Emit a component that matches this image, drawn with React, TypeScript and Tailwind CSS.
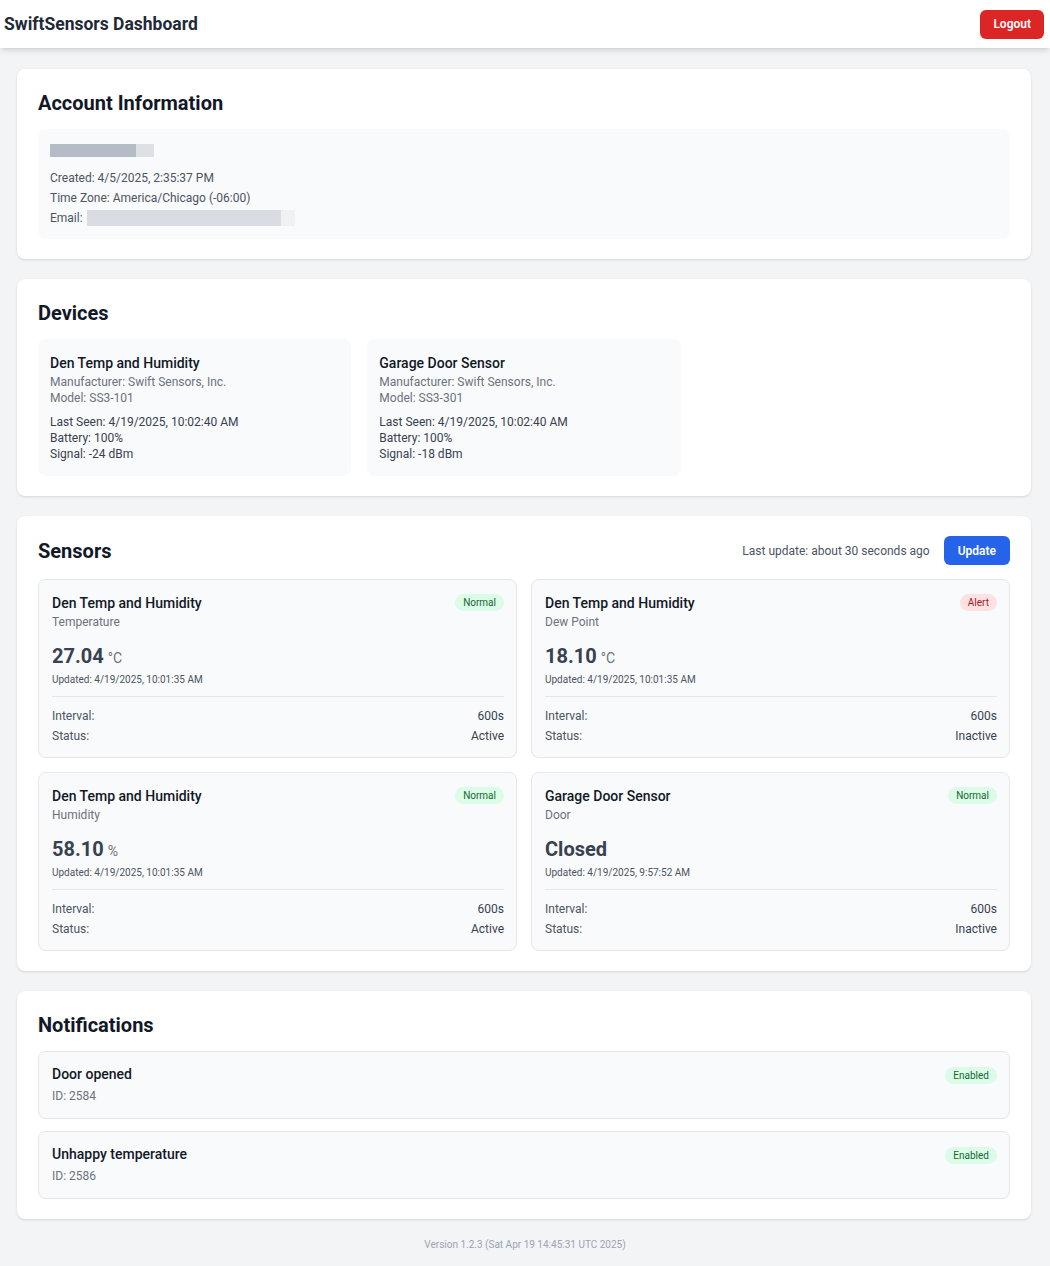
import React from 'react';

type Device = {
  name: string;
  model: string;
  lastSeen: string;
  battery: string;
  signal: string;
};

type Sensor = {
  device: string;
  kind: string;
  value: string;
  unit?: string;
  updated: string;
  alert: boolean;
  status: string;
};

const devices: Device[] = [
  { name: 'Den Temp and Humidity', model: 'SS3-101', lastSeen: '4/19/2025, 10:02:40 AM', battery: '100%', signal: '-24 dBm' },
  { name: 'Garage Door Sensor', model: 'SS3-301', lastSeen: '4/19/2025, 10:02:40 AM', battery: '100%', signal: '-18 dBm' },
];

const sensors: Sensor[] = [
  { device: 'Den Temp and Humidity', kind: 'Temperature', value: '27.04', unit: '°C', updated: '4/19/2025, 10:01:35 AM', alert: false, status: 'Active' },
  { device: 'Den Temp and Humidity', kind: 'Dew Point', value: '18.10', unit: '°C', updated: '4/19/2025, 10:01:35 AM', alert: true, status: 'Inactive' },
  { device: 'Den Temp and Humidity', kind: 'Humidity', value: '58.10', unit: '%', updated: '4/19/2025, 10:01:35 AM', alert: false, status: 'Active' },
  { device: 'Garage Door Sensor', kind: 'Door', value: 'Closed', updated: '4/19/2025, 9:57:52 AM', alert: false, status: 'Inactive' },
];

const notifications = [
  { name: 'Door opened', id: 2584 },
  { name: 'Unhappy temperature', id: 2586 },
];

function Card({ children }: { children: React.ReactNode }) {
  return <section className="bg-white rounded-lg shadow px-[21px] py-5">{children}</section>;
}

function Badge({ label, alert }: { label: string; alert?: boolean }) {
  return (
    <span
      className={
        alert
          ? 'px-2 h-[17px] flex items-center rounded-full text-[10px] bg-[#fee2e2] text-[#991b1b]'
          : 'px-2 h-[17px] flex items-center rounded-full text-[10px] bg-[#dcfce7] text-[#166534]'
      }
    >
      {label}
    </span>
  );
}

export default function App() {
  return (
    <div className="min-h-[1266px] bg-[#f3f4f6] font-['Roboto',sans-serif] text-[#111827]">
      <header className="h-12 bg-white shadow-md flex items-center justify-between pl-1 pr-1.5">
        <h1 className="text-[17.5px] font-bold text-[#1f2937]">SwiftSensors Dashboard</h1>
        <button className="h-[29px] px-[13px] rounded-md bg-[#dc2626] text-white text-xs font-semibold">Logout</button>
      </header>

      <main className="pl-[17px] pr-[19px] pt-[21px] flex flex-col gap-5">
        <Card>
          <h2 className="text-xl font-bold mb-3">Account Information</h2>
          <div className="bg-[#f9fafb] rounded-lg px-3 pt-[15px] pb-[13px]">
            <div className="flex h-[13px] mb-[13px]">
              <div className="w-[86px] bg-gray-400/70" />
              <div className="w-[18px] bg-gray-300/70" />
            </div>
            <div className="text-xs text-[#4b5563] flex flex-col gap-1">
              <p>Created: 4/5/2025, 2:35:37 PM</p>
              <p>Time Zone: America/Chicago (-06:00)</p>
              <p className="flex items-center">
                Email:
                <span className="ml-1 inline-flex h-4">
                  <span className="w-[194px] bg-gray-300/80" />
                  <span className="w-[14px] bg-gray-200/50" />
                </span>
              </p>
            </div>
          </div>
        </Card>

        <Card>
          <h2 className="text-xl font-bold mb-3">Devices</h2>
          <div className="grid grid-cols-3 gap-4">
            {devices.map((d) => (
              <div key={d.name} className="bg-[#f9fafb] rounded-lg px-3 pt-3.5 pb-3.5">
                <p className="text-sm font-medium">{d.name}</p>
                <p className="text-xs text-[#6b7280] mt-px">Manufacturer: Swift Sensors, Inc.</p>
                <p className="text-xs text-[#6b7280]">Model: {d.model}</p>
                <div className="mt-2 text-xs text-[#374151]">
                  <p>Last Seen: {d.lastSeen}</p>
                  <p>Battery: {d.battery}</p>
                  <p>Signal: {d.signal}</p>
                </div>
              </div>
            ))}
          </div>
        </Card>

        <Card>
          <div className="flex items-center justify-between mb-3.5">
            <h2 className="text-xl font-bold">Sensors</h2>
            <div className="flex items-center gap-3.5">
              <span className="text-xs text-[#4b5563]">Last update: about 30 seconds ago</span>
              <button className="h-[29px] px-[14px] rounded-md bg-[#2563eb] text-white text-xs font-semibold">Update</button>
            </div>
          </div>
          <div className="grid grid-cols-2 gap-[14px]">
            {sensors.map((s) => (
              <div key={s.kind} className="bg-[#f9fafb] border border-[#e5e7eb] rounded-lg pl-[13px] pr-3 pt-[13px] pb-[13px]">
                <div className="flex justify-between items-start">
                  <div>
                    <p className="text-sm font-medium leading-5">{s.device}</p>
                    <p className="text-xs text-[#6b7280] mt-px">{s.kind}</p>
                  </div>
                  <div className="mt-[1px]">
                    <Badge label={s.alert ? 'Alert' : 'Normal'} alert={s.alert} />
                  </div>
                </div>
                <div className="mt-3 flex items-baseline">
                  <span className="text-xl font-bold text-[#374151]">{s.value}</span>
                  {s.unit && <span className="ml-1 text-sm text-[#6b7280]">{s.unit}</span>}
                </div>
                <p className="text-[10px] text-[#4b5563] mt-0.5">Updated: {s.updated}</p>
                <div className="mt-[9px] pt-[11px] border-t border-[#e5e7eb] text-xs flex flex-col gap-1">
                  <div className="flex justify-between">
                    <span className="text-[#4b5563]">Interval:</span>
                    <span className="text-[#374151]">600s</span>
                  </div>
                  <div className="flex justify-between">
                    <span className="text-[#4b5563]">Status:</span>
                    <span className="text-[#374151]">{s.status}</span>
                  </div>
                </div>
              </div>
            ))}
          </div>
        </Card>

        <Card>
          <h2 className="text-xl font-bold mb-3">Notifications</h2>
          <div className="flex flex-col gap-3">
            {notifications.map((n) => (
              <div key={n.id} className="bg-[#f9fafb] border border-[#e5e7eb] rounded-lg pl-[13px] pr-3 pt-3 pb-3.5 flex justify-between items-start">
                <div>
                  <p className="text-sm font-medium leading-5">{n.name}</p>
                  <p className="text-xs text-[#6b7280] mt-1">ID: {n.id}</p>
                </div>
                <div className="mt-[3px]">
                  <Badge label="Enabled" />
                </div>
              </div>
            ))}
          </div>
        </Card>
      </main>

      <footer className="py-[18px] text-center text-[10px] text-[#9ca3af]">
        Version 1.2.3 (Sat Apr 19 14:45:31 UTC 2025)
      </footer>
    </div>
  );
}
